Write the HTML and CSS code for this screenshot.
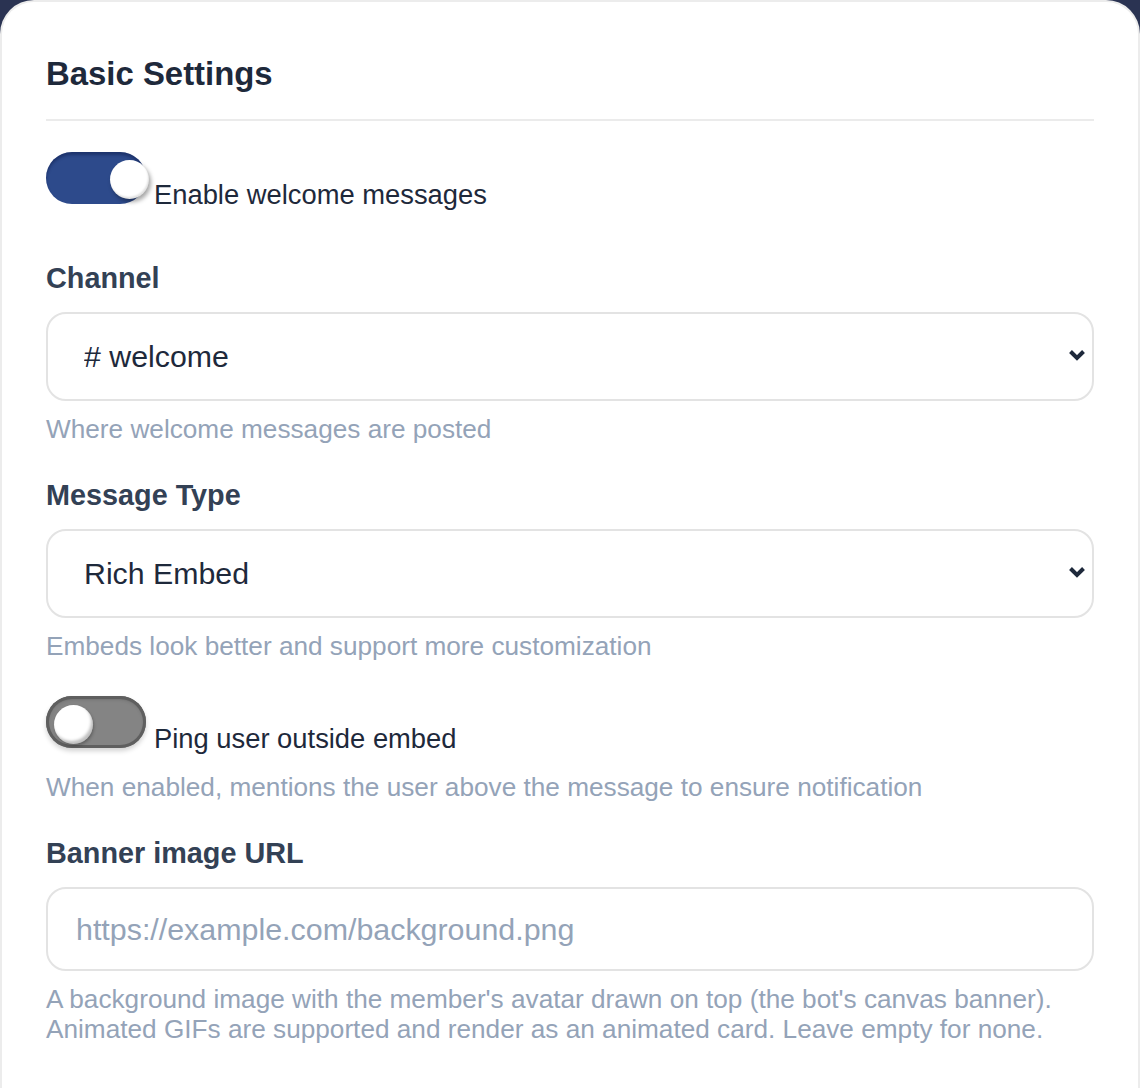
FILE: index.html
```html
<!DOCTYPE html>
<html lang="en">
<head>
<meta charset="utf-8">
<title>Welcome Settings</title>
<link rel="stylesheet" href="styles.css">
</head>
<body>
<main class="card">
  <h2 class="card-title">Basic Settings</h2>
  <hr class="divider">

  <label class="toggle-row toggle-row--first">
    <span class="switch switch--on"><span class="knob"></span></span><span class="toggle-text">Enable welcome messages</span>
  </label>

  <div class="field field--first">
    <div class="field-label">Channel</div>
    <div class="select-wrap">
      <select class="control control--select">
        <option># welcome</option>
      </select>
      <svg class="chevron" viewBox="0 0 18 13" aria-hidden="true"><path d="M2.5 2.5 L9 9 L15.5 2.5"/></svg>
    </div>
    <p class="help">Where welcome messages are posted</p>
  </div>

  <div class="field">
    <div class="field-label">Message Type</div>
    <div class="select-wrap">
      <select class="control control--select">
        <option>Rich Embed</option>
      </select>
      <svg class="chevron" viewBox="0 0 18 13" aria-hidden="true"><path d="M2.5 2.5 L9 9 L15.5 2.5"/></svg>
    </div>
    <p class="help">Embeds look better and support more customization</p>
  </div>

  <label class="toggle-row toggle-row--ping">
    <span class="switch switch--off"><span class="knob"></span></span><span class="toggle-text">Ping user outside embed</span>
  </label>
  <p class="help help--toggle">When enabled, mentions the user above the message to ensure notification</p>

  <div class="field">
    <div class="field-label">Banner image URL</div>
    <input class="control control--input" type="text" placeholder="https://example.com/background.png">
    <p class="help">A background image with the member's avatar drawn on top (the bot's canvas banner).<br>Animated GIFs are supported and render as an animated card. Leave empty for none.</p>
  </div>
</main>
</body>
</html>
```

FILE: styles.css
```css
* {
  box-sizing: border-box;
}

html,
body {
  margin: 0;
  padding: 0;
}

body {
  background: #2a3352;
  font-family: "Liberation Sans", Arial, sans-serif;
  color: #1e293b;
  height: 1088px;
  overflow: hidden;
}

.card {
  background: #ffffff;
  border: 2px solid #ececec;
  border-bottom: none;
  border-radius: 34px 34px 0 0;
  min-height: 1088px;
  padding: 52px 44px 40px 44px;
}

.card-title {
  margin: 0;
  font-size: 32.9px;
  line-height: 40px;
  font-weight: 700;
  color: #1e293b;
}

.divider {
  margin: 25px 0 0 0;
  border: none;
  height: 2px;
  background: #ebebeb;
}

/* toggle switch rows */
.toggle-row {
  display: block;
  font-size: 27.35px;
  line-height: normal;
  color: #1e293b;
  cursor: pointer;
}

.toggle-row--first {
  margin-top: 31px;
}

.toggle-row--ping {
  margin-top: 35px;
}

.switch {
  display: inline-block;
  position: relative;
  width: 100px;
  height: 52px;
  border-radius: 26px;
  vertical-align: baseline;
}

.switch--on {
  background: #2d4a8b;
  box-shadow: inset 0 3px 3px rgba(10, 25, 70, 0.45);
}

.switch--off {
  background: #848484;
  box-shadow: inset 0 0 0 3px #5f5f5f, inset 0 2px 4px rgba(0, 0, 0, 0.35), 0 3px 5px rgba(0, 0, 0, 0.18);
}

.knob {
  position: absolute;
  width: 39px;
  height: 39px;
  border-radius: 50%;
  background: #ffffff;
}

.switch--on .knob {
  left: 64px;
  top: 8px;
  box-shadow: 2px 3px 4px rgba(0, 0, 0, 0.35), inset -1px -2px 2px rgba(0, 0, 0, 0.12);
}

.switch--off .knob {
  left: 8px;
  top: 9px;
  box-shadow: inset -2px -3px 3px rgba(0, 0, 0, 0.25), 1px 2px 3px rgba(0, 0, 0, 0.25);
}

.toggle-text {
  margin-left: 8px;
}

/* labelled fields */
.field {
  margin-top: 34px;
}

.field--first {
  margin-top: 50px;
}

.field-label {
  font-size: 28.8px;
  line-height: 34px;
  font-weight: 700;
  color: #334155;
  margin-bottom: 17px;
}

.select-wrap {
  position: relative;
}

.control {
  display: block;
  width: 100%;
  border: 2px solid #e3e3e3;
  border-radius: 20px;
  background: #ffffff;
  font-family: "Liberation Sans", Arial, sans-serif;
  font-size: 30.3px;
  color: #1e293b;
  outline: none;
  margin: 0;
}

.control--select {
  height: 89px;
  padding: 0 60px 0 36px;
  appearance: none;
  -webkit-appearance: none;
}

.control--input {
  height: 84px;
  padding: 0 28px;
  font-size: 30.4px;
}

.control--input::placeholder {
  color: #94a3b8;
  opacity: 1;
}

.chevron {
  position: absolute;
  right: 8px;
  top: 37px;
  width: 18px;
  height: 13px;
  fill: none;
  stroke: #1e293b;
  stroke-width: 4;
  stroke-linecap: butt;
  stroke-linejoin: miter;
  pointer-events: none;
}

.help {
  margin: 13px 0 0 0;
  font-size: 26.2px;
  line-height: 30px;
  color: #94a3b8;
}

.help--toggle {
  margin-top: 17px;
}
```
